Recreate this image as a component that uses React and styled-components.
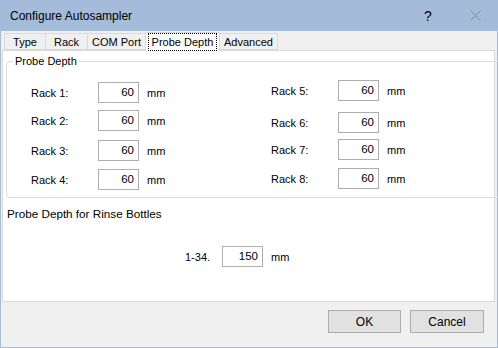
import styled, { createGlobalStyle } from "styled-components";

const Global = createGlobalStyle`
  html, body { margin: 0; padding: 0; background: #ffffff; }
  body { font-family: "Liberation Sans", Arial, sans-serif; font-size: 12px; color: #000; }
`;

const Window = styled.div`
  width: 498px;
  height: 348px;
  box-sizing: border-box;
  border: 1px solid #a4bcd9;
  border-top: none;
  display: flex;
  flex-direction: column;
  background: #f0f0f0;
`;

const TitleBar = styled.div`
  height: 31px;
  margin: 0 -1px;
  background: #a4bcd9;
  display: flex;
  align-items: center;
  padding-left: 10px;
  font-size: 12px;
`;

const Title = styled.div`
  flex: 1;
`;

const Help = styled.div`
  width: 46px;
  text-align: center;
  font-size: 14px;
  margin-right: 1px;
`;

const Close = styled.div`
  width: 46px;
  display: flex;
  justify-content: center;
  align-items: center;
`;

const Body = styled.div`
  flex: 1;
  display: flex;
  flex-direction: column;
  padding: 1px 2px 0 1px;
`;

const TabStrip = styled.div`
  display: flex;
  align-items: flex-end;
  height: 18px;
  padding-left: 2px;
  position: relative;
  z-index: 1;
`;

const Tab = styled.div`
  box-sizing: border-box;
  width: ${p => p.w}px;
  height: ${p => (p.active ? 19 : 17)}px;
  margin-bottom: ${p => (p.active ? -1 : 0)}px;
  margin-left: ${p => (p.first ? 0 : -1)}px;
  border: 1px solid #d9d9d9;
  border-bottom: ${p => (p.active ? "none" : "1px solid #d9d9d9")};
  background: ${p => (p.active ? "#ffffff" : "#f0f0f0")};
  display: flex;
  align-items: center;
  justify-content: center;
  font-size: 11px;
`;

const Focus = styled.span`
  outline: 1px dotted #000;
  outline-offset: 0;
  padding: 1px 3px;
  line-height: 14px;
`;

const Page = styled.div`
  height: 252px;
  box-sizing: border-box;
  border: 1px solid #d9d9d9;
  background: #ffffff;
  padding: 3px 3px 0 3px;
`;

const Group = styled.fieldset`
  margin: 0;
  padding: 0;
  height: 144px;
  box-sizing: border-box;
  border: 1px solid #dcdcdc;
  border-radius: 4px;
`;

const Legend = styled.legend`
  padding: 0 2px;
  margin-left: 6px;
  line-height: 14px;
  font-size: 11px;
`;

const Columns = styled.div`
  display: flex;
  padding-left: 24px;
`;

const Column = styled.div`
  width: 240px;
  display: flex;
  flex-direction: column;
`;

const Row = styled.div`
  display: flex;
  align-items: center;
  margin-top: ${p => p.top}px;
  height: 21px;
`;

const Label = styled.div`
  width: 67px;
  font-size: 11px;
`;

const Field = styled.div`
  box-sizing: border-box;
  width: ${p => p.w || 41}px;
  height: 21px;
  border: 1px solid #adadad;
  background: #fff;
  text-align: right;
  padding-right: 4px;
  line-height: 19px;
  font-size: 11.5px;
`;

const Unit = styled.div`
  margin-left: 8px;
  font-size: 11px;
`;

const Caption = styled.div`
  margin: 9px 0 0 1px;
  line-height: 14px;
  font-size: 11.7px;
`;

const RinseRow = styled.div`
  display: flex;
  align-items: center;
  margin-top: 25px;
  padding-left: 179px;
  height: 21px;
`;

const RinseLabel = styled.div`
  width: 37px;
  font-size: 11px;
`;

const Footer = styled.div`
  flex: 1;
  display: flex;
  justify-content: flex-end;
  align-items: flex-start;
  padding: 8px 11px 0 0;
  gap: 9px;
`;

const Button = styled.div`
  box-sizing: border-box;
  width: ${p => p.w}px;
  height: 23px;
  border: 1px solid #adadad;
  background: #e1e1e1;
  display: flex;
  align-items: center;
  justify-content: center;
  font-size: 12px;
`;

const left = [
  { n: 1, top: 14 },
  { n: 2, top: 7 },
  { n: 3, top: 9 },
  { n: 4, top: 8 },
];
const right = [
  { n: 5, top: 12 },
  { n: 6, top: 11 },
  { n: 7, top: 6 },
  { n: 8, top: 8 },
];

const tabs = [
  { t: "Type", w: 42 },
  { t: "Rack", w: 43 },
  { t: "COM Port", w: 59 },
  { t: "Probe Depth", w: 75, active: true },
  { t: "Advanced", w: 59 },
];

const RackColumn = ({ rows }) => (
  <Column>
    {rows.map(r => (
      <Row key={r.n} top={r.top}>
        <Label>Rack {r.n}:</Label>
        <Field>60</Field>
        <Unit>mm</Unit>
      </Row>
    ))}
  </Column>
);

export default function App() {
  return (
    <>
      <Global />
      <Window>
        <TitleBar>
          <Title>Configure Autosampler</Title>
          <Help>?</Help>
          <Close>
            <svg width="11" height="11" viewBox="0 0 11 11">
              <path d="M0.5 0.5 L10.5 10.5 M10.5 0.5 L0.5 10.5" stroke="#7d8ea5" strokeWidth="1" fill="none" />
            </svg>
          </Close>
        </TitleBar>
        <Body>
          <TabStrip>
            {tabs.map((t, i) => (
              <Tab key={t.t} w={t.w} active={t.active} first={i === 0}>
                {t.active ? <Focus>{t.t}</Focus> : t.t}
              </Tab>
            ))}
          </TabStrip>
          <Page>
            <Group>
              <Legend>Probe Depth</Legend>
              <Columns>
                <RackColumn rows={left} />
                <RackColumn rows={right} />
              </Columns>
            </Group>
            <Caption>Probe Depth for Rinse Bottles</Caption>
            <RinseRow>
              <RinseLabel>1-34.</RinseLabel>
              <Field w={41}>150</Field>
              <Unit>mm</Unit>
            </RinseRow>
          </Page>
          <Footer>
            <Button w={73}>OK</Button>
            <Button w={74}>Cancel</Button>
          </Footer>
        </Body>
      </Window>
    </>
  );
}
